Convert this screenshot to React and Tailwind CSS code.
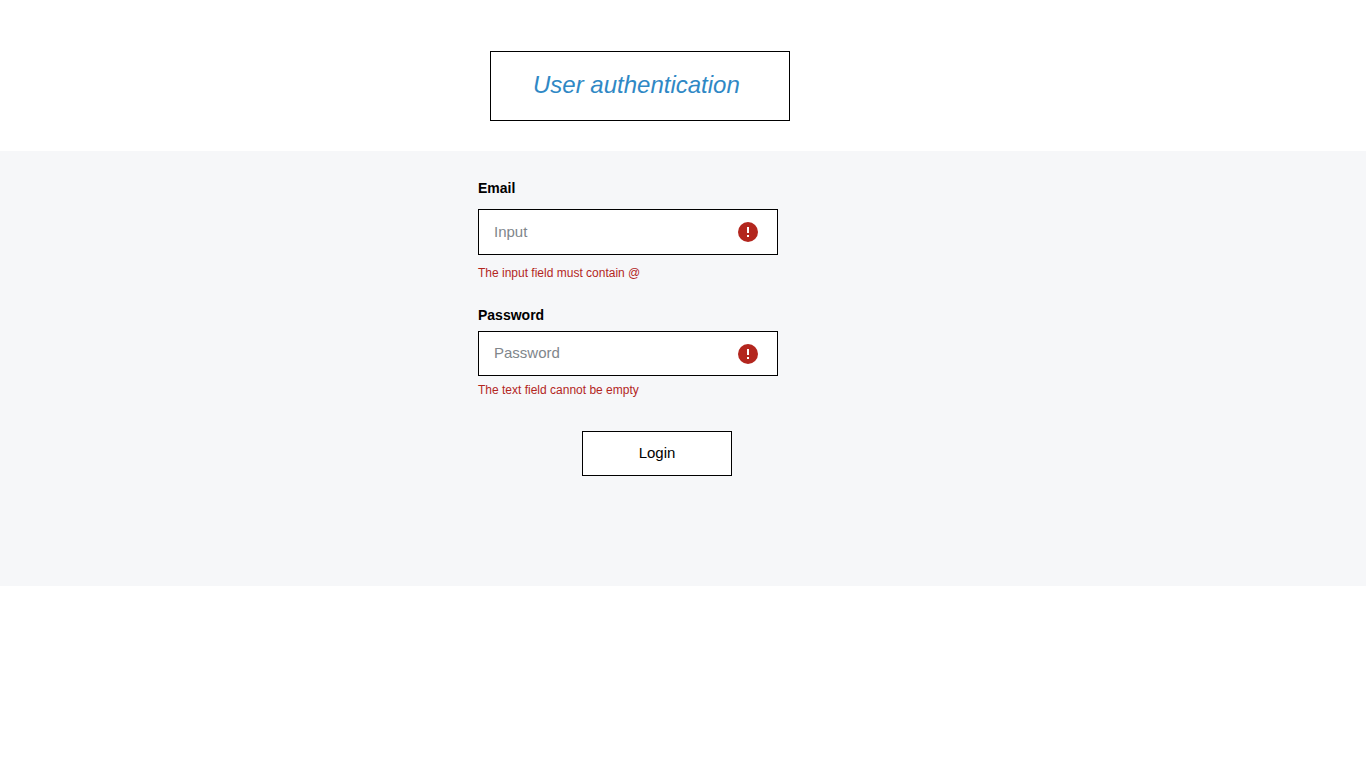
function ErrorIcon() {
  return (
    <svg width="20" height="20" viewBox="0 0 20 20" aria-hidden="true" className="shrink-0">
      <circle cx="10" cy="10" r="10" fill="#b3261e" />
      <path d="M9 5h2v6H9zM9 13h2v2H9z" fill="#fff" />
    </svg>
  );
}

function InputBox({ id, type, placeholder, height }) {
  return (
    <div className={`flex items-center border border-black bg-white pr-[19px] pl-[15px] ${height}`}>
      <input
        id={id}
        type={type}
        placeholder={placeholder}
        aria-describedby={`${id}-error`}
        className="h-full min-w-0 flex-1 bg-transparent pb-[2px] text-[15px] text-black outline-none placeholder:text-[#80868b]"
      />
      <ErrorIcon />
    </div>
  );
}

export default function App() {
  return (
    <div className="bg-white font-['Liberation_Sans',Arial,sans-serif] text-black">
      <header className="flex justify-center pt-[51px] pr-[86px] pb-[30px]">
        <div className="w-[300px] border border-black px-[42px] pt-[17px] pb-[19px]">
          <h1 className="text-2xl leading-8 whitespace-nowrap text-[#2f88c5] italic">User authentication</h1>
        </div>
      </header>
      <main className="flex justify-center bg-[#f6f7f9] pt-[29px] pr-[110px] pb-[110px]">
        <form noValidate className="flex w-[300px] flex-col" onSubmit={(e) => e.preventDefault()}>
          <label htmlFor="email" className="mb-[13px] text-sm leading-4 font-bold">Email</label>
          <InputBox id="email" type="email" placeholder="Input" height="h-[46px]" />
          <p id="email-error" className="mt-[10px] text-xs leading-4 text-[#b3261e]">The input field must contain @</p>
          <label htmlFor="password" className="mt-[26px] mb-2 text-sm leading-4 font-bold">Password</label>
          <InputBox id="password" type="password" placeholder="Password" height="h-[45px]" />
          <p id="password-error" className="mt-[6px] text-xs leading-4 text-[#b3261e]">The text field cannot be empty</p>
          <button type="submit" className="mt-[33px] ml-[104px] h-[45px] w-[150px] border border-black bg-white text-[15px]">
            Login
          </button>
        </form>
      </main>
    </div>
  );
}
